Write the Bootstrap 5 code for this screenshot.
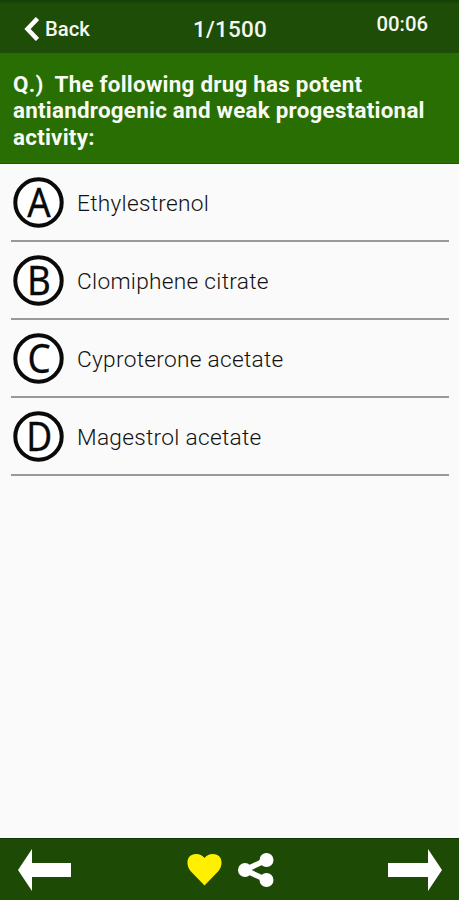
<!DOCTYPE html>
<html lang="en">
<head>
<meta charset="utf-8">
<meta name="viewport" content="width=device-width, initial-scale=1">
<title>Quiz</title>
<link href="https://cdn.jsdelivr.net/npm/bootstrap@5.3.0/dist/css/bootstrap.min.css" rel="stylesheet">
<style>
body{font-family:Roboto,"Liberation Sans",sans-serif;background:#fafafa;height:900px;overflow:hidden}
.topbar{height:53px;background:linear-gradient(#153d05 0,#1d4d06 4px);color:#f5f8f2;display:grid;grid-template-columns:1fr auto 1fr;padding:0 31px 0 32px;font-weight:500}
.back{font-size:20.3px;line-height:24px;margin:17px 0 0 -8px;gap:6px;font-weight:500}
.count{font-size:22.5px;line-height:26px;margin-top:16px;letter-spacing:.2px}
.timer{font-size:20.3px;line-height:24px;margin-top:12px}
.question{height:111px;background:#296e02;color:#f8fbf5;font-size:22.4px;letter-spacing:.24px;font-weight:700;line-height:26.5px;padding:17.5px 13px 0;white-space:pre-line;border-bottom:1px solid #1f5a04}
.options{padding:0 10px 0 11px}
.option{height:78px;border:0;border-bottom:2px solid #999;background:none;padding:1px 0 0 2px;gap:13px;color:#111;font-size:22.7px;font-weight:300;letter-spacing:.28px;text-align:left}
.option span{padding-top:4px}
.letter{width:51px;height:51px;flex:none;overflow:visible}
.letter text{font-family:"Noto Sans","Open Sans",sans-serif;font-size:39.5px;font-weight:400;letter-spacing:0;fill:#0a0a0a;stroke:#0a0a0a;stroke-width:.3px}
.bottombar{height:62px;background:#1d4b05;border-top:1px solid #103604;padding:0 17px 0 18px}
.bottombar button,.back{border:0;background:none;padding:0;color:inherit}
.bottombar svg{display:block}
.tools{padding-right:2px}
</style>
<script src="https://cdn.jsdelivr.net/npm/bootstrap@5.3.0/dist/js/bootstrap.bundle.min.js"></script>
</head>
<body class="d-flex flex-column">
<header class="topbar">
  <button class="back d-flex align-items-center align-self-start"><svg width="15" height="24" viewBox="0 0 15 24"><path d="M13.500 1.500 3.500 12l10 10.500" fill="none" stroke="#fff" stroke-width="4.500"/></svg><span>Back</span></button>
  <div class="count">1/1500</div>
  <div class="timer text-end">00:06</div>
</header>
<section class="question">Q.)&nbsp; The following drug has potent
antiandrogenic and weak progestational
activity:</section>
<main class="options flex-grow-1 d-flex flex-column">
  <button class="option d-flex align-items-center"><svg class="letter" viewBox="0 0 51 51"><circle cx="25.500" cy="25.500" r="23.200" fill="#fff" stroke="#0a0a0a" stroke-width="4"/><text transform="translate(26 39.500) scale(.93 1)" text-anchor="middle">A</text></svg><span>Ethylestrenol</span></button>
  <button class="option d-flex align-items-center"><svg class="letter" viewBox="0 0 51 51"><circle cx="25.500" cy="25.500" r="23.200" fill="#fff" stroke="#0a0a0a" stroke-width="4"/><text transform="translate(26 39.500) scale(.93 1)" text-anchor="middle">B</text></svg><span>Clomiphene citrate</span></button>
  <button class="option d-flex align-items-center"><svg class="letter" viewBox="0 0 51 51"><circle cx="25.500" cy="25.500" r="23.200" fill="#fff" stroke="#0a0a0a" stroke-width="4"/><text transform="translate(26 39.500) scale(.93 1)" text-anchor="middle">C</text></svg><span>Cyproterone acetate</span></button>
  <button class="option d-flex align-items-center"><svg class="letter" viewBox="0 0 51 51"><circle cx="25.500" cy="25.500" r="23.200" fill="#fff" stroke="#0a0a0a" stroke-width="4"/><text transform="translate(26.300 39.500) scale(.9 1)" text-anchor="middle">D</text></svg><span>Magestrol acetate</span></button>
</main>
<footer class="bottombar d-flex align-items-center justify-content-between">
  <button aria-label="Previous"><svg width="53" height="42" viewBox="0 0 53 42"><path d="M0 21 14 0v14h39v14H14v14Z" fill="#fff"/></svg></button>
  <div class="tools d-flex align-items-center gap-3 ms-1">
    <button aria-label="Favourite"><svg width="35" height="34" viewBox="0 0 35 34"><path d="M17.500 32.500 3.500 18C-2 11 0 1 9 1c4 0 7 2 8.500 4C19 3 22 1 26 1c9 0 11 10 5.500 17Z" fill="#fff000"/></svg></button>
    <button aria-label="Share"><svg width="36" height="34" viewBox="0 0 36 34"><path d="M28.500 7 7 17l21.500 10" fill="none" stroke="#fff" stroke-width="5.500"/><g fill="#fff"><circle cx="7" cy="17" r="7"/><circle cx="28.500" cy="7" r="7"/><circle cx="28.500" cy="27" r="7"/></g></svg></button>
  </div>
  <button aria-label="Next"><svg width="54" height="42" viewBox="0 0 54 42"><path d="M54 21 40 0v14H0v14h40v14Z" fill="#fff"/></svg></button>
</footer>
</body>
</html>
